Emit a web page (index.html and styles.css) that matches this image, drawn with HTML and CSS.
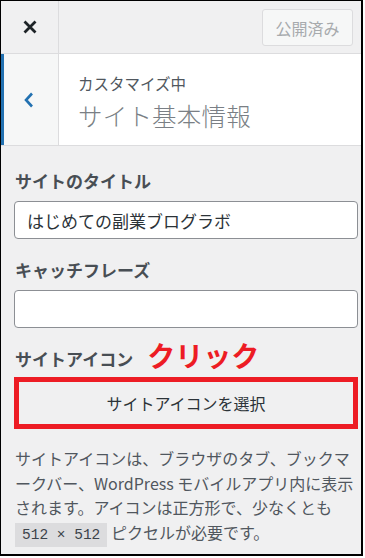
FILE: index.html
```html
<!DOCTYPE html>
<html lang="ja">
<head>
	<meta charset="UTF-8">
	<title>サイト基本情報</title>
	<link rel="stylesheet" href="styles.css">
</head>
<body>
<div class="frame">
	<header class="topbar">
		<button class="close" aria-label="閉じる">
			<svg width="14" height="14" viewBox="0 0 14 14"><path d="M1.5 1.5 L12.5 12.5 M12.5 1.5 L1.5 12.5" stroke="#1d2327" stroke-width="2.8" fill="none"/></svg>
		</button>
		<div class="spacer"></div>
		<button class="publish">公開済み</button>
	</header>

	<div class="section-head">
		<button class="back" aria-label="戻る">
			<svg width="10" height="16" viewBox="0 0 10 16"><path d="M8 1.5 L2 8 L8 14.5" stroke="#2271b1" stroke-width="2.6" fill="none"/></svg>
		</button>
		<div class="titles">
			<span class="crumb">カスタマイズ中</span>
			<h2>サイト基本情報</h2>
		</div>
	</div>

	<div class="controls">
		<label class="label">サイトのタイトル</label>
		<input class="field" type="text" value="はじめての副業ブログラボ">

		<label class="label second">キャッチフレーズ</label>
		<input class="field" type="text" value="">

		<div class="icon-row">
			<span class="label">サイトアイコン</span>
			<span class="note">クリック</span>
		</div>
		<button class="select">サイトアイコンを選択</button>

		<p class="desc">サイトアイコンは、ブラウザのタブ、ブックマークバー、WordPress モバイルアプリ内に表示されます。アイコンは正方形で、少なくとも <code>512 × 512</code> ピクセルが必要です。</p>
	</div>
</div>
</body>
</html>
```

FILE: styles.css
```css
body {
	margin: 0;
	background: #fff;
	font-family: "Noto Sans CJK JP", "Liberation Sans", sans-serif;
}
.frame {
	box-sizing: border-box;
	width: 363px;
	height: 556px;
	border-top: 1px solid #000;
	border-left: 1px solid #000;
	border-right: 2px solid #000;
	border-bottom: 2px solid #000;
	background: #f0f0f1;
	overflow: hidden;
}
button {
	font-family: inherit;
	cursor: pointer;
}

/* top bar */
.topbar {
	display: flex;
	align-items: center;
	height: 52px;
	border-bottom: 1px solid #dcdcde;
	background: #f0f0f1;
}
.close {
	width: 58px;
	height: 52px;
	border: 0;
	border-right: 1px solid #dcdcde;
	background: transparent;
	display: flex;
	align-items: center;
	justify-content: center;
	padding: 0 0 1px 0;
}
.spacer {
	flex: 1;
}
.publish {
	box-sizing: border-box;
	width: 91px;
	height: 37px;
	margin-right: 8px;
	margin-top: 1px;
	border: 1px solid #dcdcde;
	border-radius: 3px;
	background: #f6f7f7;
	color: #a7aaad;
	font-size: 16px;
	line-height: 1;
	padding: 0;
}

/* section heading */
.section-head {
	display: flex;
	height: 91px;
	background: #fff;
	border-bottom: 1px solid #dcdcde;
}
.back {
	box-sizing: border-box;
	width: 58px;
	border: 0;
	border-left: 3px solid #2271b1;
	border-right: 1px solid #dcdcde;
	background: #f6f7f7;
	display: flex;
	align-items: center;
	justify-content: center;
	padding: 0 5px 0 0;
}
.titles {
	padding: 19px 0 0 19px;
	display: flex;
	flex-direction: column;
}
.crumb {
	font-size: 15.5px;
	line-height: 20px;
	color: #50575e;
}
.titles h2 {
	margin: 8px 0 0 0;
	font-size: 24.5px;
	line-height: 30px;
	font-weight: 300;
	color: #7a7f85;
	letter-spacing: 0.2px;
}

/* controls */
.controls {
	padding: 23px 3px 0 13px;
}
.label {
	display: block;
	padding-left: 1px;
	font-size: 17px;
	line-height: 24px;
	font-weight: bold;
	color: #484e54;
}
.label.second {
	margin-top: 19px;
}
.field {
	box-sizing: border-box;
	display: block;
	width: 100%;
	height: 38px;
	margin-top: 8px;
	padding: 0 12px;
	border: 1px solid #8c8f94;
	border-radius: 4px;
	background: #fff;
	font-family: inherit;
	font-size: 17px;
	color: #2c3338;
}
.icon-row {
	display: flex;
	align-items: center;
	height: 24px;
	margin-top: 19px;
}
.note {
	margin-left: 14px;
	margin-bottom: 8px;
	font-size: 28px;
	line-height: 24px;
	font-weight: bold;
	color: #ed1c24;
}
.select {
	box-sizing: border-box;
	display: block;
	width: 100%;
	height: 52px;
	margin-top: 6px;
	border: 5px solid #ed1c24;
	background: #f0f0f1;
	font-size: 16px;
	color: #2c3338;
	padding: 0;
}
.desc {
	margin: 17px 0 0 1px;
	font-size: 16px;
	line-height: 24.5px;
	color: #50575e;
}
.desc code {
	font-family: "Liberation Mono", monospace;
	font-size: 14.5px;
	padding: 4px 7px;
	background: #dcdcde;
	color: #3c434a;
}
```
